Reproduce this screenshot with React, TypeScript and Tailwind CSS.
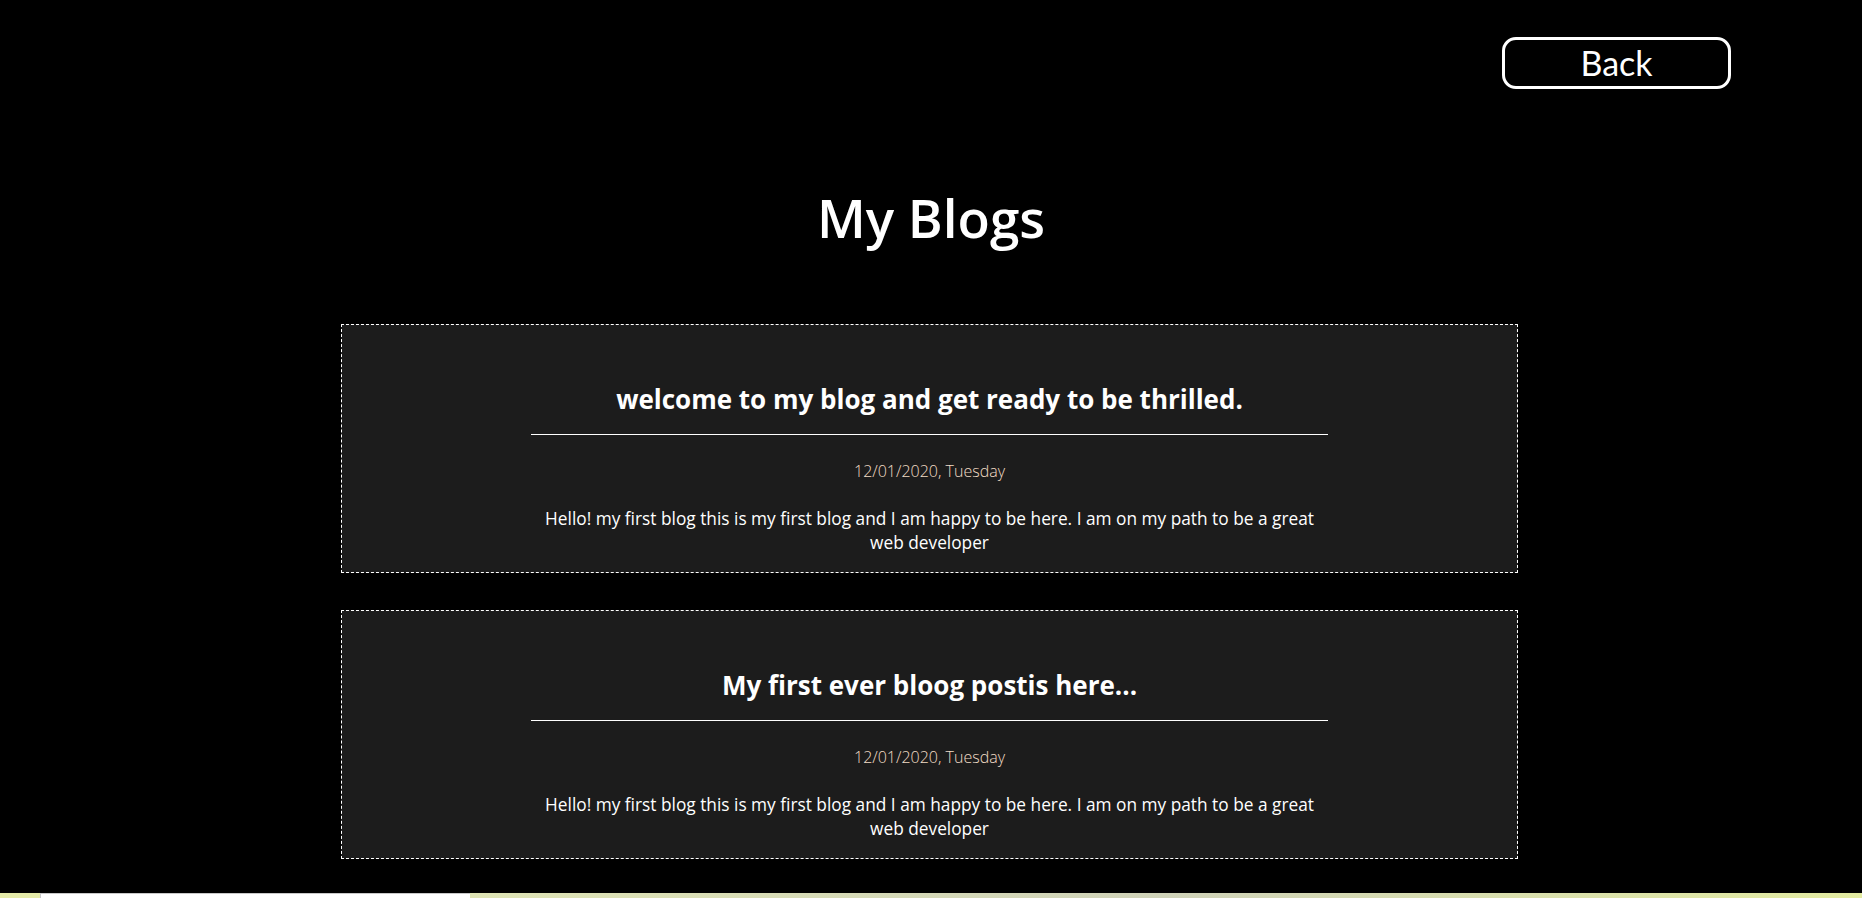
import React from 'react';

const posts = [
  {
    title: 'welcome to my blog and get ready to be thrilled.',
    date: '12/01/2020, Tuesday',
    body: 'Hello! my first blog this is my first blog and I am happy to be here. I am on my path to be a great web developer',
  },
  {
    title: 'My first ever bloog postis here...',
    date: '12/01/2020, Tuesday',
    body: 'Hello! my first blog this is my first blog and I am happy to be here. I am on my path to be a great web developer',
  },
];

function BlogCard({ title, date, body }: { title: string; date: string; body: string }) {
  return (
    <div className="bg-[#1c1c1c] border border-dashed border-white pt-[58px] pb-[17px]">
      <div className="w-[797px] mx-auto flex flex-col items-center text-center">
        <h2 className="text-[26px] leading-[32px] font-bold text-white">{title}</h2>
        <div className="w-full h-px bg-white mt-[19px]" />
        <p className="mt-[24px] text-[16px] leading-[24px] font-light text-[#f2dcc6]">{date}</p>
        <p className="mt-[24px] text-[17.3px] leading-[24px] text-white">{body}</p>
      </div>
    </div>
  );
}

export default function App() {
  return (
    <div className="min-h-screen bg-black font-['Open_Sans',sans-serif] overflow-hidden">
      <div className="flex justify-end pt-[37px] pr-[131px]">
        <button className="w-[229px] h-[52px] border-[3px] border-white rounded-[14px] text-white text-[34px] leading-none font-['Comic_Sans_MS','Lato',sans-serif]">
          Back
        </button>
      </div>

      <h1 className="mt-[99px] text-center text-white text-[53px] leading-[60px] font-semibold">My Blogs</h1>

      <div className="w-[1177px] ml-[341px] mt-[76px] flex flex-col gap-[37px]">
        {posts.map((post, i) => (
          <BlogCard key={i} {...post} />
        ))}
      </div>

      <div className="mt-[34px] h-[40px] flex">
        <div className="w-[40px] bg-[#e5eba8]" />
        <div className="w-[430px] bg-white border-l border-t border-[#c8c8c8]" />
        <div className="flex-1 bg-gradient-to-r from-[#dfe4b4] via-[#cfd2b8] to-[#e3eba0]" />
      </div>
    </div>
  );
}
